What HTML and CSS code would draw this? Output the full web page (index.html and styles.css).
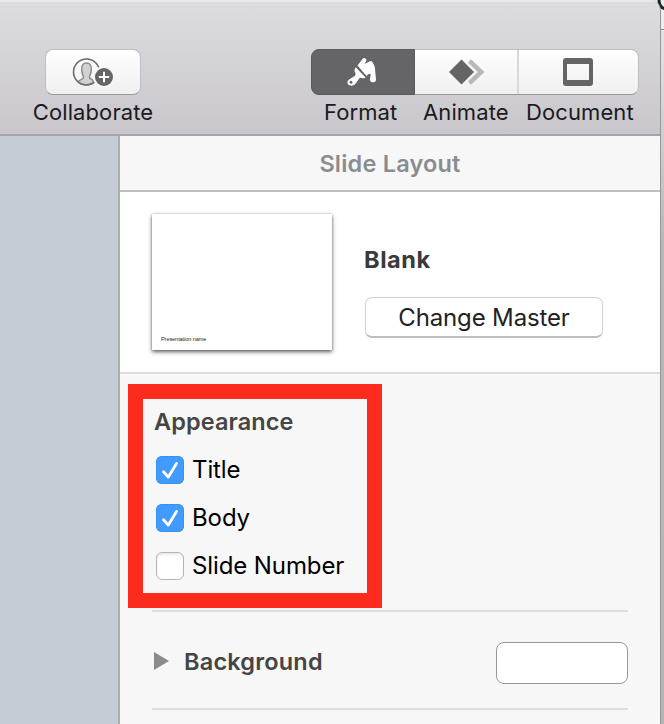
FILE: index.html
```html
<!DOCTYPE html>
<html lang="en">
<head>
<meta charset="utf-8">
<title>Slide Layout</title>
<link rel="stylesheet" href="styles.css">
</head>
<body>
<div class="desktop">
  <div class="window">
    <header class="toolbar">
      <div class="collab">
        <button class="tool-button" aria-label="Collaborate">
          <svg width="42" height="30" viewBox="0 0 42 30">
            <path d="M6 24.500C8 22.700 11.300 22.400 11.500 20.300C11.700 18.500 9.800 17.500 9.700 12.500C9.600 7.500 11.500 6 14.500 6s4.900 1.500 4.800 6.500c-.1 5-2 6-1.800 7.800.2 1.900 3 2.200 4.500 3.700C18 29 10 29 6 24.500z" fill="#d2d2d2" stroke="#8c8c8c" stroke-width="1.500"/>
            <circle cx="14.500" cy="15" r="13" fill="none" stroke="#6b6b6b" stroke-width="1.600"/>
            <circle cx="32" cy="20" r="11" fill="#f6f6f6"/>
            <circle cx="32" cy="20" r="9" fill="#656565"/>
            <path d="M26.800 20h10.400M32 14.800v10.400" stroke="#fff" stroke-width="2"/>
          </svg>
        </button>
        <span class="tool-label l-collab">Collaborate</span>
      </div>
      <div class="modes">
        <div class="segments">
          <button class="segment s1 active" aria-label="Format">
            <svg width="30" height="30" viewBox="0 0 30 30" fill="#fff">
              <path d="M10.500 8.500L15.500 2q1.500-1.500 3-.5t.7 2.500l-1.700 3 5.500-2.800q1.500-.5 2.300.8l2.200 4q.7 1.500.6 4l.7 7.500q.8 2.500-.5 3.900-2.500 1.800-4.700 0-1.200-1.400-.4-3.900l.5-3.300q-1.200-.8-2.600.3L19.500 19z"/>
              <path d="M8.700 10.200L18.600 20.500Q16.500 22 14.800 20.900q-1.700-.8-2.800.8l-3.300 4.900q-2 2.600-5.200 2Q0 27.800.5 24.500q.7-1.800 2.700-2.800l4.500-2.700q1.600-1.300.6-3.300-1.800-2.500.4-5.500zM4 23.800a1.500 1.500 0 1 0 .01 0z" fill-rule="evenodd"/>
            </svg>
          </button>
          <button class="segment s2" aria-label="Animate">
            <svg width="36" height="26" viewBox="0 0 36 26">
              <path d="M20.500 2L32.200 13 20.500 24" fill="none" stroke="#b9b9b9" stroke-width="4.500"/>
              <path d="M12.500-1.800L27.300 13 12.500 27.800z" fill="#f6f6f6"/>
              <path d="M12.500.5L25 13 12.500 25.500 0 13z" fill="#656565"/>
            </svg>
          </button>
          <button class="segment s3" aria-label="Document">
            <svg width="30" height="28" viewBox="0 0 30 28">
              <path d="M3 0h24q3 0 3 3v22q0 3-3 3H3q-3 0-3-3V3q0-3 3-3zM4 6v16h22V6z" fill="#656565" fill-rule="evenodd"/>
            </svg>
          </button>
        </div>
        <div class="mode-labels">
          <span class="tool-label l-format">Format</span>
          <span class="tool-label l-animate">Animate</span>
          <span class="tool-label l-document">Document</span>
        </div>
      </div>
    </header>
    <div class="content">
      <aside class="canvas"></aside>
      <main class="inspector">
        <h1 class="panel-title"><span>Slide Layout</span></h1>
        <section class="master">
          <div class="thumbnail"><span>Presentation name</span></div>
          <div class="master-info">
            <strong>Blank</strong>
            <button class="change"><span>Change Master</span></button>
          </div>
        </section>
        <section class="appearance">
          <h2 class="heading">Appearance</h2>
          <div class="option"><i class="box checked"><svg width="28" height="28" viewBox="0 0 28 28"><path d="M7.500 15.800L12.300 21 20.500 7.500" fill="none" stroke="#fff" stroke-width="2.800" stroke-linecap="round" stroke-linejoin="round"/></svg></i><span class="o-title">Title</span></div>
          <div class="option"><i class="box checked"><svg width="28" height="28" viewBox="0 0 28 28"><path d="M7.500 15.800L12.300 21 20.500 7.500" fill="none" stroke="#fff" stroke-width="2.800" stroke-linecap="round" stroke-linejoin="round"/></svg></i><span class="o-body">Body</span></div>
          <div class="option"><i class="box"></i><span class="o-number">Slide Number</span></div>
          <div class="highlight"></div>
        </section>
        <section class="background">
          <svg class="disclosure" width="16" height="18" viewBox="0 0 16 18"><path d="M0 0l15 9L0 18z" fill="#8b8b8b"/></svg>
          <h2 class="heading">Background</h2>
          <div class="well"></div>
        </section>
      </main>
    </div>
  </div>
  <div class="behind">
    <svg width="14" height="12" viewBox="0 0 14 12"><path d="M1 0l4 3" stroke="#5b87a8" stroke-width="2"/><path d="M9 0q0 8 7 9" fill="none" stroke="#18242e" stroke-width="3"/></svg>
  </div>
</div>
</body>
</html>
```
FILE: styles.css
```css
* { box-sizing: border-box; }
body { margin: 0; font-family: Inter, "Liberation Sans", sans-serif; overflow: hidden; }
h1, h2, button { margin: 0; padding: 0; font: inherit; }
button { border: 0; background: none; }
svg { display: block; }
span { white-space: nowrap; }

.desktop { position: relative; display: flex; width: 664px; height: 724px; overflow: hidden; background: linear-gradient(#e6e6e6 0, #dedede 60px, #b9b9b9 240px, #b5b5b5 100%); }
.window { position: relative; z-index: 1; width: 661px; height: 724px; border-right: 1px solid #969696; border-top-right-radius: 10px; overflow: hidden; }
.behind { position: absolute; left: 650px; top: 0; width: 14px; height: 30px; background: #ededed; border-bottom: 1px solid #888; overflow: hidden; }

.toolbar { display: flex; height: 136px; padding: 49px 21px 0 33px; justify-content: space-between; background: linear-gradient(#dddce0, #c9c7cc); border-bottom: 2px solid #a5a4a8; box-shadow: inset 0 2px #e9e8eb; }
.collab { display: flex; flex-direction: column; align-items: center; width: 120px; }
.tool-button { display: flex; align-items: center; justify-content: center; width: 96px; height: 46px; border: 1px solid #bfbdc2; border-bottom-color: #9d9ba0; border-radius: 8px; background: linear-gradient(#fefefe, #f0f0f0); }
.tool-label { font-size: 22px; line-height: 28px; letter-spacing: .1px; color: #1c1a20; }
.collab .tool-label { margin-top: 3px; }
.modes { width: 328px; }
.segments { display: flex; height: 46px; border: 1px solid #bfbdc2; border-bottom-color: #9d9ba0; border-radius: 8px; background: linear-gradient(#fefefe, #f0f0f0); }
.segment { display: flex; align-items: center; justify-content: center; }
.s1 { width: 104px; margin: -1px 0 -1px -1px; padding-right: 3px; border-radius: 8px 0 0 8px; background: #656567; border: 1px solid #5b5b5d; }
.s2 { width: 104px; padding-left: 1px; border-right: 2px solid #d9d9d9; }
.s3 { flex: 1; padding-right: 2px; }
.mode-labels { display: flex; margin-top: 3px; padding-left: 13px; }
.l-format { width: 99px; }
.l-animate { width: 103px; }

.content { display: flex; height: 588px; }
.canvas { width: 120px; background: #c6ccd4; border-right: 2px solid #acacac; }
.inspector { width: 540px; background: #f7f7f7; }
.panel-title { height: 56px; padding-top: 12px; line-height: 32px; text-align: center; font-size: 23.500px; letter-spacing: .2px; font-weight: 600; color: #8a8d90; border-bottom: 2px solid #bdc1c6; }
.master { display: flex; height: 182px; padding: 22px 32px 0; background: #fff; border-bottom: 2px solid #dddddd; }
.thumbnail { display: flex; align-items: flex-end; width: 180px; height: 136px; padding: 0 0 7px 9px; background: #fff; box-shadow: 0 2px 4px rgba(0,0,0,.6), 0 0 2px rgba(0,0,0,.25); }
.thumbnail span { font: 5.500px/8px "Liberation Sans", sans-serif; letter-spacing: -.05px; color: #222; }
.master-info { padding: 30px 0 0 33px; }
.master-info strong { display: block; margin-left: -1px; font-size: 23.500px; line-height: 32px; letter-spacing: .6px; font-weight: 700; color: #3a3a3a; }
.change { display: flex; align-items: center; justify-content: center; width: 238px; height: 41px; margin-top: 21px; border: 1px solid #d0d0d0; border-bottom: 2px solid #bdbdbd; border-radius: 7px; background: #fff; color: #222; font-size: 24px; letter-spacing: -.15px; }

.appearance { position: relative; height: 238px; padding: 32px 0 0 36px; }
.appearance::after { content: ""; position: absolute; left: 32px; bottom: 0; width: 476px; height: 2px; background: #ddd; }
.heading { font-size: 23.500px; line-height: 32px; font-weight: 600; letter-spacing: .1px; color: #454545; }
.appearance .heading { margin: 0 0 8px -2px; }
.option { display: flex; align-items: center; height: 48px; gap: 8px; font-size: 24px; line-height: 32px; letter-spacing: -.1px; color: #000; }
.box { width: 28px; height: 28px; border: 1px solid #b5b5b5; border-radius: 6px; background: #fff; box-shadow: inset 0 2px 2px rgba(0,0,0,.08); }
.checked { border: 0; background: #429bfa; box-shadow: inset 0 0 0 1px #3b91ee; }
.highlight { position: absolute; left: 8px; top: 10px; width: 254px; height: 224px; border: 15px solid #fd2b1d; }

.background { display: flex; align-items: center; width: 476px; height: 98px; margin-left: 32px; padding: 5px 0 0 2px; border-bottom: 2px solid #ddd; }
.disclosure { margin-top: -4px; }
.background .heading { margin: -2px 0 0 14px; letter-spacing: .2px; }
.well { width: 132px; height: 42px; margin-left: auto; border: 1px solid #979797; border-radius: 8px; background: #fff; }
```
